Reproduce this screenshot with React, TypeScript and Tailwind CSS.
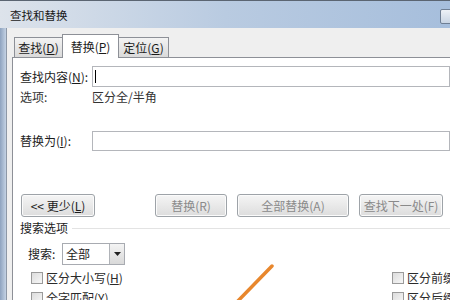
import React from "react";

const font = "font-['Microsoft_YaHei','Noto_Sans_CJK_SC',sans-serif]";

const Checkbox: React.FC<{ label: React.ReactNode }> = ({ label }) => (
  <div className="flex items-center h-[14px]">
    <span className="shrink-0 w-[12px] h-[12px] border border-[#9a9a9a] bg-gradient-to-br from-[#dcdcdc] to-[#f7f7f7]" />
    <span className="ml-[3px] text-[12px] leading-[14px] text-[#2a2a2a] whitespace-nowrap">{label}</span>
  </div>
);

const WinButton: React.FC<{ w: string; disabled?: boolean; children: React.ReactNode }> = ({ w, disabled, children }) => (
  <button
    className={`${w} shrink-0 h-[23px] rounded-[3px] border border-[#9ea3a8] bg-gradient-to-b from-[#f5f5f5] to-[#dddddd] text-[12px] leading-[14px] ${
      disabled ? "text-[#8a8a8a]" : "text-[#1c1c1c]"
    } shadow-[inset_0_0_0_1px_#fbfbfb]`}
  >
    {children}
  </button>
);

const Field: React.FC<{ h: string; cursor?: boolean }> = ({ h, cursor }) => (
  <div className={`flex-1 ${h} border border-[#b4b6bb] bg-white flex items-center`}>
    {cursor && <span className="ml-[2px] w-px h-[13px] bg-black" />}
  </div>
);

export default function App() {
  return (
    <div className={`w-[450px] h-[300px] overflow-hidden relative bg-[#c9d6e6] ${font}`}>
      {/* title bar */}
      <div className="h-[28px] border-t border-[#5b6572] bg-gradient-to-r from-[#dde3eb] via-[#b9cbe1] to-[#a6bedc] flex items-center">
        <span className="ml-[10px] text-[11.5px] text-[#1a1a1a] leading-[14px]">查找和替换</span>
        <div className="ml-auto mr-[-6px] w-[16px] h-[15px] mt-[3px] rounded-[2px] border border-[#6f7f94] bg-gradient-to-b from-[#eef2f7] to-[#c9d5e4]" />
      </div>

      <div className="flex h-[272px]">
        {/* left frame */}
        <div className="shrink-0 w-[7px] bg-gradient-to-r from-[#8ea3bf] to-[#c4d2e4] border-r border-[#8d98a7]" />

        {/* client */}
        <div className="flex-1 min-w-0 bg-[#efefef] pl-[5px] pt-[6px] flex flex-col">
          {/* tabs */}
          <div className="flex items-end h-[23px] pl-[2px] text-[12px] leading-[14px] text-[#1c1c1c]">
            <div className="w-[49px] h-[20px] border border-b-0 border-[#8d9097] bg-gradient-to-b from-[#f3f3f3] to-[#dadada] flex items-center justify-center">
              查找(<span className="underline">D</span>)
            </div>
            <div className="relative z-10 w-[57px] h-[24px] mb-[-1px] ml-[-1px] border border-b-0 border-[#8d9097] bg-white flex items-center justify-center">
              替换(<span className="underline">P</span>)
            </div>
            <div className="w-[51px] h-[20px] ml-[-1px] border border-b-0 border-[#8d9097] bg-gradient-to-b from-[#f3f3f3] to-[#dadada] flex items-center justify-center">
              定位(<span className="underline">G</span>)
            </div>
          </div>

          {/* panel */}
          <div className="flex-1 border-t border-l border-[#8d9097] bg-white pl-[7px] pt-[8px] text-[12px] leading-[14px] text-[#1c1c1c]">
            <div className="flex items-center">
              <span className="shrink-0 w-[72px] whitespace-nowrap">
                查找内容(<span className="underline">N</span>):
              </span>
              <Field h="h-[21px]" cursor />
            </div>
            <div className="flex items-center h-[16px] mt-[2px] text-[#333]">
              <span className="shrink-0 w-[72px]">选项:</span>
              <span>区分全/半角</span>
            </div>
            <div className="flex items-center mt-[26px]">
              <span className="shrink-0 w-[72px] whitespace-nowrap">
                替换为(<span className="underline">I</span>):
              </span>
              <Field h="h-[20px]" />
            </div>

            <div className="flex mt-[43px] pl-[1px]">
              <WinButton w="w-[74px]">
                &lt;&lt; 更少(<span className="underline">L</span>)
              </WinButton>
              <div className="ml-[60px] flex gap-[10px]">
                <WinButton w="w-[72px]" disabled>
                  替换(R)
                </WinButton>
                <WinButton w="w-[112px]" disabled>
                  全部替换(A)
                </WinButton>
                <WinButton w="w-[84px]" disabled>
                  查找下一处(F)
                </WinButton>
              </div>
            </div>

            <div className="flex items-center h-[14px] mt-[4px]">
              <span className="whitespace-nowrap">搜索选项</span>
              <div className="flex-1 ml-[4px] h-px bg-[#e3e3e3]" />
            </div>

            <div className="flex items-center mt-[8px] pl-[8px]">
              <span className="w-[34px]">搜索:</span>
              <div className="w-[63px] h-[22px] border border-[#a8abb1] flex">
                <span className="flex-1 pl-[3px] flex items-center">全部</span>
                <span className="w-[15px] border-l border-[#b0b3b8] bg-gradient-to-b from-[#f4f4f4] to-[#d9d9d9] flex items-center justify-center">
                  <svg width="7" height="4" viewBox="0 0 7 4">
                    <path d="M0 0h7L3.5 4z" fill="#222" />
                  </svg>
                </span>
              </div>
            </div>

            <div className="grid grid-cols-[361px_1fr] mt-[6px] pl-[11px] gap-y-[6px]">
              <Checkbox label={<>区分大小写(<span className="underline">H</span>)</>} />
              <Checkbox label="区分前缀" />
              <Checkbox label={<>全字匹配(<span className="underline">Y</span>)</>} />
              <Checkbox label="区分后缀" />
            </div>
          </div>
        </div>
      </div>

      {/* orange annotation stroke */}
      <svg className="absolute left-0 top-0 pointer-events-none" width="450" height="300">
        <line x1="272" y1="266" x2="235" y2="304" stroke="#e8872d" strokeWidth="3.5" strokeLinecap="round" />
      </svg>
    </div>
  );
}
